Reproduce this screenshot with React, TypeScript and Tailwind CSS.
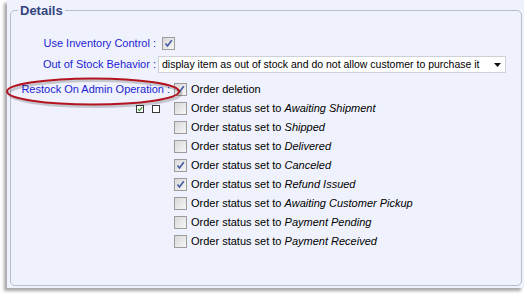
import React from "react";

const font = { fontFamily: '"Liberation Sans", Arial, sans-serif' };

const Check = ({ checked }: { checked?: boolean }) => (
  <span className="relative inline-block w-[13px] h-[13px] border border-[#9c9c9c] bg-gradient-to-br from-[#d8d8d8] to-[#f6f6f6] shrink-0">
    {checked && (
      <svg viewBox="0 0 11 11" className="absolute left-0 top-0 w-[11px] h-[11px]">
        <path d="M2.5 5.5 L4.5 8 L8.8 2.2" fill="none" stroke="#4657a6" strokeWidth="1.6" />
      </svg>
    )}
  </span>
);

const TinyBox = ({ checked }: { checked?: boolean }) => (
  <span className="relative inline-block w-[8px] h-[8px] border border-[#3a3a3a] bg-white">
    {checked && (
      <svg viewBox="0 0 6 6" className="absolute left-0 top-0 w-[6px] h-[6px]">
        <path d="M1 3 L2.5 4.6 L5.2 1.2" fill="none" stroke="#2e9a2e" strokeWidth="1.2" />
      </svg>
    )}
  </span>
);

const options: { label: string; status?: string; checked?: boolean }[] = [
  { label: "Order deletion", checked: true },
  { label: "Order status set to ", status: "Awaiting Shipment" },
  { label: "Order status set to ", status: "Shipped" },
  { label: "Order status set to ", status: "Delivered" },
  { label: "Order status set to ", status: "Canceled", checked: true },
  { label: "Order status set to ", status: "Refund Issued", checked: true },
  { label: "Order status set to ", status: "Awaiting Customer Pickup" },
  { label: "Order status set to ", status: "Payment Pending" },
  { label: "Order status set to ", status: "Payment Received" },
];

export default function App() {
  return (
    <div className="relative w-[527px] h-[298px] bg-white overflow-hidden text-[11px]" style={font}>
      <div className="ml-[7px] w-[517px] h-[288px] bg-[#eff2fc] pt-[3px] pl-[3px] shadow-[-3px_3px_3px_rgba(0,0,0,0.35)]">
        <fieldset className="w-[512px] h-[283px] border border-[#b9bdc6] rounded-[5px]">
          <legend className="ml-[7px] px-[2px] text-[13px] leading-[15px] font-bold text-[#34447e]">
            Details
          </legend>

          <div className="mt-[16px] flex items-center h-[19px]">
            <div className="w-[145px] text-right text-[#1d1dd4]">Use Inventory Control :</div>
            <div className="ml-[6px] flex items-center">
              <Check checked />
            </div>
          </div>

          <div className="mt-[3px] flex items-center h-[17px]">
            <div className="w-[145px] text-right text-[#1d1dd4]">Out of Stock Behavior :</div>
            <div className="ml-[2px] w-[348px] h-[17px] bg-white border border-[#cdd0d6] flex items-center justify-between pl-[3px] pr-[3px] text-black text-[10.5px] whitespace-nowrap overflow-hidden">
              <span>display item as out of stock and do not allow customer to purchase it</span>
              <svg viewBox="0 0 7 4" className="w-[7px] h-[4px] mr-[1px] shrink-0">
                <path d="M0 0 H7 L3.5 4 Z" fill="#111" />
              </svg>
            </div>
          </div>

          <div className="mt-[7px] flex">
            <div className="w-[159px] flex flex-col items-end">
              <div className="h-[19px] flex items-center text-[#1d1dd4] whitespace-nowrap">Restock On Admin Operation :</div>
              <div className="h-[19px] flex items-center gap-[8px] pr-[10px]">
                <TinyBox checked />
                <TinyBox />
              </div>
            </div>
            <div className="ml-[4px] flex flex-col">
              {options.map((o) => (
                <label key={o.label + (o.status ?? "")} className="h-[19px] flex items-center gap-[4px] text-black whitespace-nowrap">
                  <Check checked={o.checked} />
                  <span>
                    {o.label}
                    {o.status && <i>{o.status}</i>}
                  </span>
                </label>
              ))}
            </div>
          </div>
        </fieldset>
      </div>

      <svg className="absolute left-[4px] top-[75px] w-[182px] h-[36px] pointer-events-none" viewBox="0 0 182 36">
        <ellipse cx="91" cy="18.5" rx="86" ry="13" fill="none" stroke="rgba(0,0,0,0.18)" strokeWidth="3" />
        <ellipse cx="89" cy="16.5" rx="86" ry="13" fill="none" stroke="#b3141f" strokeWidth="2" />
      </svg>
    </div>
  );
}
